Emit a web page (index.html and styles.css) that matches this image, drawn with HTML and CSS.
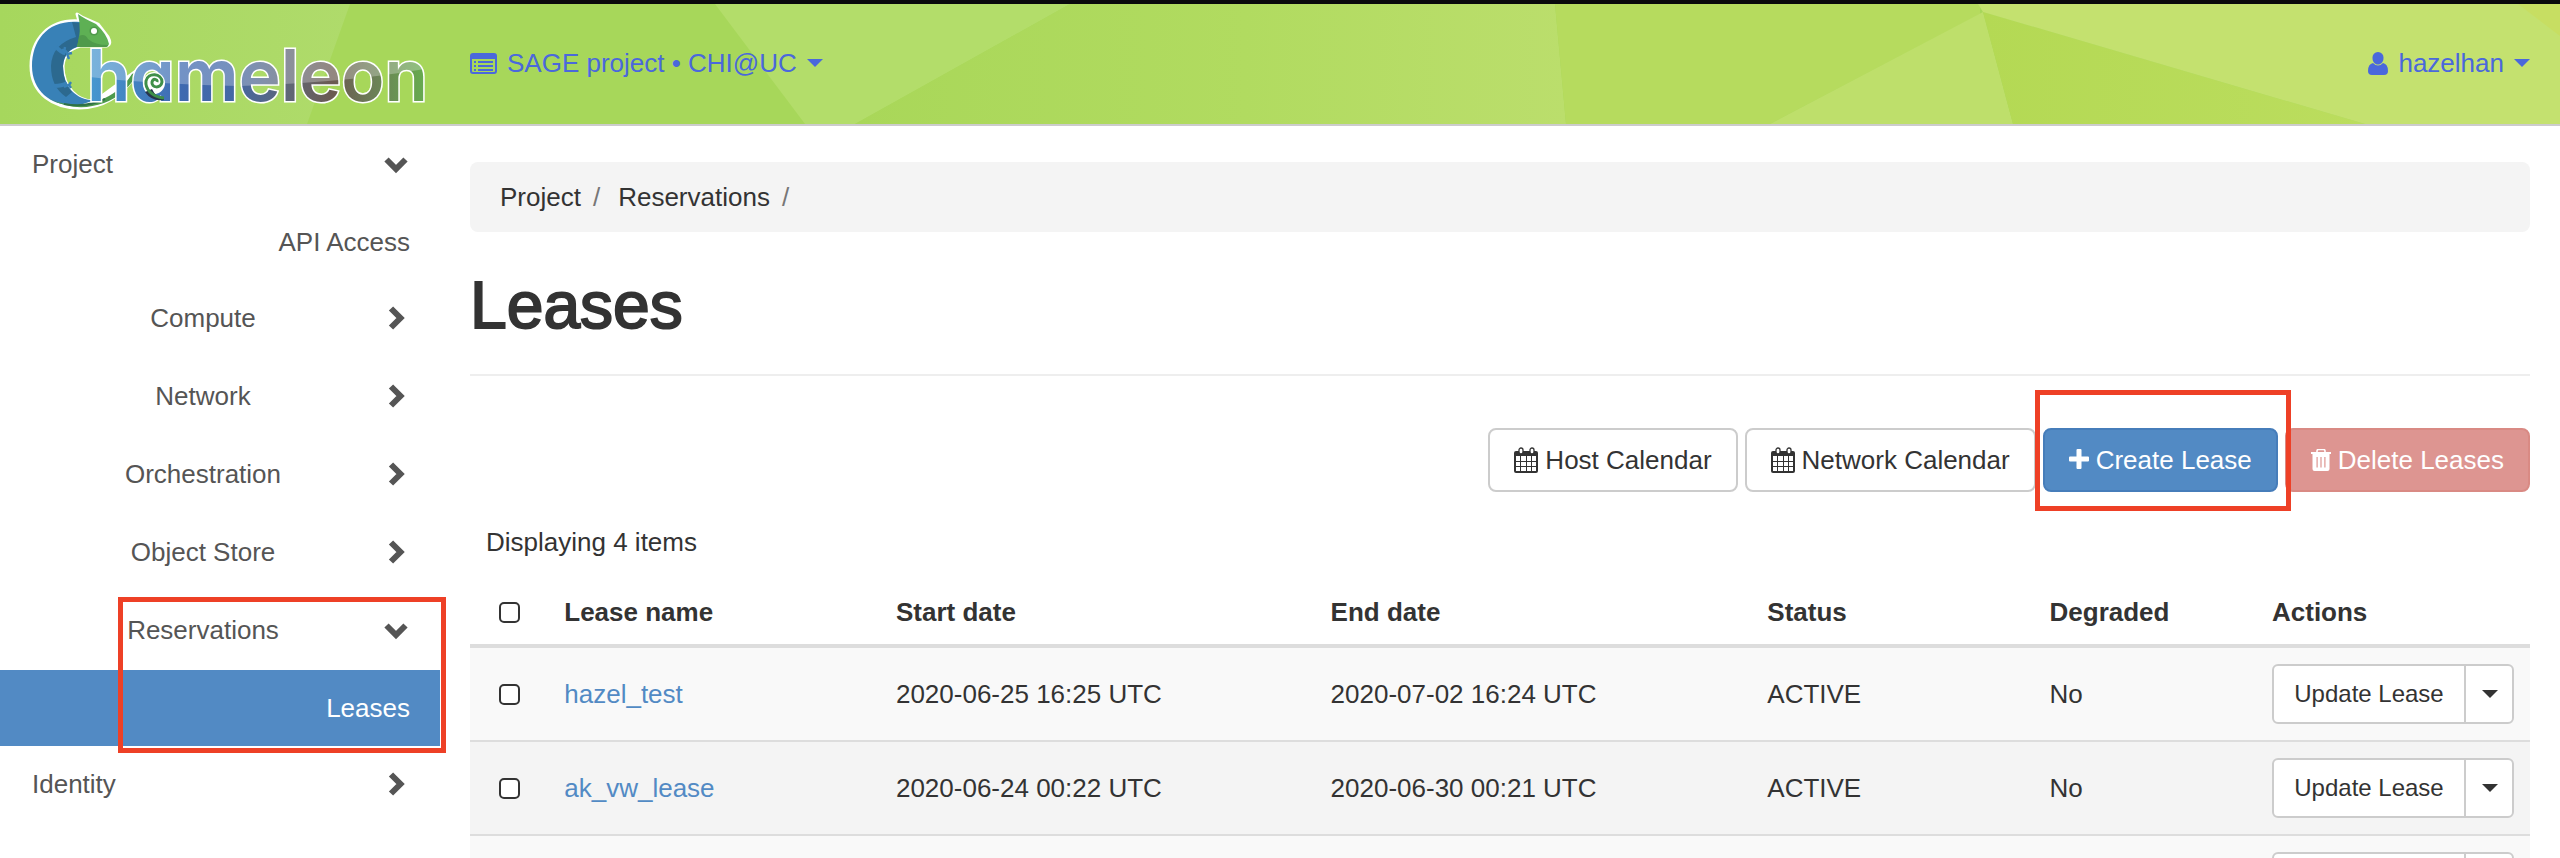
FILE: index.html
```
<!DOCTYPE html>
<html lang="en">
<head>
<meta charset="utf-8">
<title>Leases - Chameleon</title>
<link rel="stylesheet" href="styles.css">
</head>
<body>
<svg class="defs" aria-hidden="true">
  <symbol id="chevron-down" viewBox="0 0 24 24"><path d="M2.500 7.500l9.500 9.500 9.500-9.500" fill="none" stroke="currentColor" stroke-width="6"/></symbol>
  <symbol id="chevron-right" viewBox="0 0 24 24"><path d="M7 2.500l9.500 9.500L7 21.500" fill="none" stroke="currentColor" stroke-width="6"/></symbol>
  <symbol id="caret" viewBox="0 0 16 8"><path d="M0 0h16L8 8z" fill="currentColor"/></symbol>
  <symbol id="calendar" viewBox="0 0 24 26">
    <path d="M2 4h20q2 0 2 2v18q0 2-2 2H2q-2 0-2-2V6q0-2 2-2z" fill="currentColor"/>
    <path d="M2 9h4v5H2zM7 9h5v5H7zM13 9h4v5h-4zM18 9h4v5h-4zM2 15h4v4H2zM7 15h5v4H7zM13 15h4v4h-4zM18 15h4v4h-4zM2 20h4v4H2zM7 20h5v4H7zM13 20h4v4h-4zM18 20h4v4h-4z" fill="#fff"/>
    <rect x="5" y="1" width="4" height="6" rx="2" fill="#fff" stroke="currentColor" stroke-width="1.3"/>
    <rect x="16" y="1" width="4" height="6" rx="2" fill="#fff" stroke="currentColor" stroke-width="1.3"/>
  </symbol>
</svg>
<div class="shell">
  <header class="topbar">
    <svg class="topbar-art" viewBox="0 0 2560 120" preserveAspectRatio="none" aria-hidden="true">
      <defs>
        <linearGradient id="g1"><stop offset="0" stop-color="#a6d75d"/><stop offset="1" stop-color="#afdb6b"/></linearGradient>
        <linearGradient id="g2"><stop offset="0" stop-color="#a9d759"/><stop offset=".55" stop-color="#b1db60"/><stop offset="1" stop-color="#bbde6c"/></linearGradient>
        <linearGradient id="g3"><stop offset="0" stop-color="#b4d954"/><stop offset="1" stop-color="#bbdd5e"/></linearGradient>
      </defs>
      <rect width="2560" height="120" fill="#a7d75a"/>
      <path d="M0 0H350L307 120H0z" fill="url(#g1)"/>
      <path d="M715 0H1070L855 120H805z" fill="#b3dd6a"/>
      <path d="M1070 0H1555L1566 120H855z" fill="url(#g2)"/>
      <path d="M1555 0H1980V10L1770 120H1566z" fill="#b6db5e"/>
      <path d="M1983 8L2013 120H1770z" fill="#bedf6b"/>
      <path d="M1983 8L2365 120H2013z" fill="url(#g3)"/>
      <path d="M1978 0H2560V120H2365L1983 8z" fill="#c4e16f"/>
      <path d="M2518 0H2560V32z" fill="#c7de62"/>
    </svg>
    <a class="brand" href="#" aria-label="Chameleon">
      <svg class="brand-logo" viewBox="0 0 440 120" role="img">
        <defs>
          <linearGradient id="ink" x1="92" x2="427" y1="0" y2="0" gradientUnits="userSpaceOnUse">
            <stop offset="0" stop-color="#4697cf"/><stop offset=".27" stop-color="#3f69b0"/><stop offset=".42" stop-color="#4468a5"/>
            <stop offset=".6" stop-color="#616673"/><stop offset=".72" stop-color="#6b5a51"/><stop offset=".83" stop-color="#6c7c57"/><stop offset="1" stop-color="#66ad4e"/>
          </linearGradient>
          <pattern id="gloss" patternUnits="userSpaceOnUse" width="440" height="120">
            <rect width="440" height="120" fill="url(#ink)"/>
            <path d="M0 0H440V62Q360 78 240 82Q150 80 90 73H0z" fill="#fff" fill-opacity=".27"/>
          </pattern>
        </defs>
        <path d="M79 17C48 15 31 36 31 62C31 90 54 104 79 104C104 104 120 92 134 74L140 64L95 97C78 98 63 84 63 62C64 50 70 45 80 42H107C111 40 110 37 108 33L98 20L82 13L77 10z" fill="#fff" stroke="#fff" stroke-width="3" stroke-linejoin="round"/>
        <path d="M80 18C48 15 32 36 32 62C32 89 54 104 80 101L95 96C78 97 63 84 63 62C64 50 70 45 80 42z" fill="#3881b7"/>
        <path d="M72 18L80 19V42C70 44 64 50 63 62Q63 78 72 88L66 93Q51 83 51 62Q52 40 76 33z" fill="#2c698f"/>
        <path d="M56 43q6 6 9 6M54 82q8 0 13-3" fill="none" stroke="#3881b7" stroke-width="4"/>
        <path d="M62 46q4 0 5 3m5 0l-5 1 2 5m-5-6l1-6M64 83l5-2 2 3m-2-3l2-3" fill="none" stroke="#3881b7" stroke-width="2.4"/>
        <path d="M50 95Q75 106 98 97Q120 89 132 70L140 66Q126 91 104 99Q76 109 50 95z" fill="#4c9a4c"/>
        <path d="M64 100Q86 104 105 95" fill="none" stroke="#2f7146" stroke-width="2"/>
        <text class="brand-text" x="87" y="97">hameleon</text>
        <path d="M78 10Q83 14 96 20Q107 30 109 40Q108 43 105 43H77Q82 27 78 10z" fill="#5eb054"/>
        <path d="M79 32Q85 29 88 35Q95 41 108 41Q108 43 105 43H77z" fill="#4f9a4b"/>
        <circle cx="94" cy="27" r="4.6" fill="#4f9a4b"/><circle cx="94" cy="27" r="3" fill="#fff"/>
        <circle cx="154" cy="79" r="11" fill="#fff"/>
        <path d="M145 88q7 10 19 8v-3q-8 1-12-8z" fill="#28344b"/>
        <path d="M164 94C151 93 145 84 146 77C148 68 162 69 162 78C161 85 151 84 152 78C153 74 158 75 157 78" fill="none" stroke="#3f8f49" stroke-width="3"/>
      </svg>
    </a>
    <button class="menu-btn" type="button">
      <svg class="icon-list" viewBox="0 0 27 21" aria-hidden="true"><rect x="1" y="1" width="25" height="19" rx="2" fill="none" stroke="currentColor" stroke-width="2"/><path d="M1 1h25v5H1zM4 8h2v2H4zM8 8h15v2H8zM4 12h2v2H4zM8 12h15v2H8zM4 16h2v2H4zM8 16h15v2H8z" fill="currentColor"/></svg>
      <span>SAGE project • CHI@UC</span>
      <svg class="caret" aria-hidden="true"><use href="#caret"/></svg>
    </button>
    <button class="menu-btn menu-user" type="button">
      <svg class="icon-user" viewBox="0 0 20 23" aria-hidden="true"><path d="M10 0a5.500 5.500 0 0 1 5.500 6C15.500 10 13 12.500 10 12.500S4.500 10 4.500 6A5.500 5.500 0 0 1 10 0zM5 11q5 5 10 0 5 1 5 8 0 4-4 4H4q-4 0-4-4 0-7 5-8z" fill="currentColor"/></svg>
      <span>hazelhan</span>
      <svg class="caret" aria-hidden="true"><use href="#caret"/></svg>
    </button>
  </header>
  <div class="columns">
    <nav class="sidebar" aria-label="Main">
      <a class="nav-item nav-top" href="#"><span>Project</span><svg class="chevron" aria-hidden="true"><use href="#chevron-down"/></svg></a>
      <a class="nav-item nav-leaf" href="#">API Access</a>
      <div class="nav-groups">
        <a class="nav-item nav-sub" href="#"><span>Compute</span><svg class="chevron" aria-hidden="true"><use href="#chevron-right"/></svg></a>
        <a class="nav-item nav-sub" href="#"><span>Network</span><svg class="chevron" aria-hidden="true"><use href="#chevron-right"/></svg></a>
        <a class="nav-item nav-sub" href="#"><span>Orchestration</span><svg class="chevron" aria-hidden="true"><use href="#chevron-right"/></svg></a>
        <a class="nav-item nav-sub" href="#"><span>Object Store</span><svg class="chevron" aria-hidden="true"><use href="#chevron-right"/></svg></a>
        <div class="nav-open">
          <a class="nav-item nav-sub" href="#"><span>Reservations</span><svg class="chevron" aria-hidden="true"><use href="#chevron-down"/></svg></a>
          <a class="nav-item nav-leaf active" href="#" aria-current="page">Leases</a>
          <span class="mark mark-nav"></span>
        </div>
      </div>
      <a class="nav-item nav-top" href="#"><span>Identity</span><svg class="chevron" aria-hidden="true"><use href="#chevron-right"/></svg></a>
    </nav>
    <main class="content">
      <ol class="breadcrumb">
        <li><a href="#">Project</a></li>
        <li><a href="#">Reservations</a></li>
      </ol>
      <div class="page-header"><h1>Leases</h1></div>
      <div class="toolbar">
        <button class="btn" type="button"><svg class="icon-cal" aria-hidden="true"><use href="#calendar"/></svg>Host Calendar</button>
        <button class="btn" type="button"><svg class="icon-cal" aria-hidden="true"><use href="#calendar"/></svg>Network Calendar</button>
        <div class="marked">
          <button class="btn btn-primary" type="button"><svg class="icon-sm" viewBox="0 0 20 22" aria-hidden="true"><path d="M8.500 0h3q1 0 1 1v6.500H19q1 0 1 1v3q0 1-1 1h-6.500V19q0 1-1 1h-3q-1 0-1-1v-6.500H1q-1 0-1-1v-3q0-1 1-1h6.500V1q0-1 1-1z" fill="currentColor"/></svg>Create Lease</button>
          <span class="mark mark-btn"></span>
        </div>
        <button class="btn btn-danger" type="button" disabled><svg class="icon-sm" viewBox="0 0 20 22" aria-hidden="true"><path d="M6 3V2q0-1.500 1.500-1.500h5Q14 .5 14 2v1" fill="none" stroke="currentColor" stroke-width="1.600"/><path d="M0 3h20v2h-1.500v15q0 2-2 2h-13q-2 0-2-2V5H0zM5.500 8v10.500h1.200V8zM9.400 8v10.500h1.200V8zM13.300 8v10.500h1.200V8z" fill="currentColor" fill-rule="evenodd"/></svg>Delete Leases</button>
      </div>
      <p class="count">Displaying 4 items</p>
      <table class="leases">
        <colgroup><col class="c-check"><col class="c-name"><col class="c-start"><col class="c-end"><col class="c-status"><col class="c-degraded"><col class="c-actions"></colgroup>
        <thead>
          <tr><th class="check"><input type="checkbox" aria-label="Select all"></th><th>Lease name</th><th>Start date</th><th>End date</th><th>Status</th><th>Degraded</th><th>Actions</th></tr>
        </thead>
        <tbody>
          <tr>
            <td class="check"><input type="checkbox" aria-label="Select hazel_test"></td>
            <td><a href="#">hazel_test</a></td><td>2020-06-25 16:25 UTC</td><td>2020-07-02 16:24 UTC</td><td>ACTIVE</td><td>No</td>
            <td><div class="split"><button type="button">Update Lease</button><button class="split-more" type="button" aria-label="More actions"><svg class="caret" aria-hidden="true"><use href="#caret"/></svg></button></div></td>
          </tr>
          <tr class="shaded">
            <td class="check"><input type="checkbox" aria-label="Select ak_vw_lease"></td>
            <td><a href="#">ak_vw_lease</a></td><td>2020-06-24 00:22 UTC</td><td>2020-06-30 00:21 UTC</td><td>ACTIVE</td><td>No</td>
            <td><div class="split"><button type="button">Update Lease</button><button class="split-more" type="button" aria-label="More actions"><svg class="caret" aria-hidden="true"><use href="#caret"/></svg></button></div></td>
          </tr>
          <tr>
            <td class="check"><input type="checkbox" aria-label="Select lease"></td>
            <td></td><td></td><td></td><td></td><td></td>
            <td><div class="split"><button type="button" aria-label="Update Lease"></button><button class="split-more" type="button" aria-label="More actions"><svg class="caret" aria-hidden="true"><use href="#caret"/></svg></button></div></td>
          </tr>
        </tbody>
      </table>
    </main>
  </div>
</div>
</body>
</html>
```
FILE: styles.css
```
* { box-sizing: border-box; }

body {
  margin: 0;
  background: #fff;
  color: #333;
  font: 26px/36px "Liberation Sans", Arial, sans-serif;
}

button {
  font: inherit;
  color: inherit;
  margin: 0;
  cursor: pointer;
}

a { text-decoration: none; }
svg { display: block; flex: none; }
.defs { position: absolute; width: 0; height: 0; }

.shell {
  height: 100vh;
  overflow: hidden;
}

/* Top bar */
.topbar {
  position: relative;
  display: flex;
  align-items: center;
  border-top: 4px solid #0a0a0c;
  border-bottom: 2px solid #ccc;
  padding-right: 30px;
}
.topbar-art {
  position: absolute;
  inset: 0;
  width: 100%;
  height: 100%;
}
.brand {
  position: relative;
  width: 470px;
}
.brand-logo { width: 440px; height: 120px; }
.brand-text {
  font-family: Inter, sans-serif;
  font-size: 71px;
  font-weight: 600;
  font-feature-settings: "cv11";
  fill: url(#gloss);
  stroke: #fff;
  stroke-width: 3px;
  paint-order: stroke;
}
.menu-btn {
  position: relative;
  display: flex;
  align-items: center;
  gap: 10px;
  padding: 0 0 2px;
  border: 0;
  background: none;
  color: #4a68dc;
}
.menu-user { margin-left: auto; }
.icon-list { width: 27px; height: 21px; }
.icon-user { width: 20px; height: 23px; }
.caret { width: 16px; height: 8px; }

.columns { display: flex; }

/* Sidebar */
.sidebar {
  flex: none;
  width: 440px;
  margin-right: 30px;
}
.nav-item {
  display: flex;
  align-items: center;
  height: 76px;
  padding: 0 32px;
  color: #555;
}
.nav-top { justify-content: space-between; }
.nav-sub { padding-left: 22px; }
.nav-sub span { flex: 1; text-align: center; }
.nav-leaf {
  justify-content: flex-end;
  margin-top: 2px;
  padding-right: 30px;
}
.nav-groups {
  display: flex;
  flex-direction: column;
  gap: 2px;
}
.nav-open { position: relative; }
.active {
  background: #528ac4;
  color: #fff;
}
.chevron { width: 24px; height: 24px; }

/* Highlight frames */
.mark {
  position: absolute;
  z-index: 2;
  border: 5px solid #ee4026;
  pointer-events: none;
}
.mark-nav { inset: 5px -6px -7px 118px; }
.mark-btn { inset: -38px -13px -19px -8px; }

/* Content */
.content {
  flex: 1;
  min-width: 0;
  padding: 36px 30px 0 0;
}
.breadcrumb {
  display: flex;
  margin: 0;
  padding: 17px 30px;
  list-style: none;
  background: #f4f4f4;
  border-radius: 8px;
}
.breadcrumb a { color: #333; }
.breadcrumb li::after {
  content: "/";
  padding: 0 18px 0 12px;
  color: #777;
}
.page-header {
  padding: 37px 0 33px;
  border-bottom: 2px solid #eee;
}
h1 {
  margin: 0;
  font-size: 66px;
  line-height: 72px;
  font-weight: 400;
  -webkit-text-stroke: 2px #333;
}

.toolbar {
  display: flex;
  justify-content: flex-end;
  gap: 7px;
  margin-top: 52px;
}
.marked { position: relative; }
.btn {
  display: flex;
  align-items: center;
  gap: 7px;
  padding: 15px 24px;
  border: 2px solid #ccc;
  border-radius: 8px;
  background: #fff;
  line-height: 30px;
  white-space: nowrap;
}
.btn-primary { background: #528ac4; border-color: #467dba; color: #fff; }
.btn-danger { background: #dd9591; border-color: #d98a84; color: #fff; }
.icon-cal { width: 24px; height: 26px; }
.icon-sm { width: 20px; height: 22px; }

.count { margin: 32px 16px 20px; }

/* Table */
.leases {
  width: 100%;
  table-layout: fixed;
  border-collapse: separate;
  border-spacing: 0;
}
.c-check { width: 3.8%; }
.c-name { width: 16.1%; }
.c-start { width: 21.1%; }
.c-end { width: 21.2%; }
.c-status { width: 13.7%; }
.c-degraded { width: 10.8%; }
.c-actions { width: 13.3%; }
.leases th {
  height: 68px;
  padding: 0 16px;
  border-bottom: 4px solid #ddd;
  text-align: left;
}
.leases td {
  padding: 16px;
  border-bottom: 2px solid #ddd;
  background: #f9f9f9;
}
.leases .shaded td { background: #f4f4f4; }
.leases a { color: #528ac4; }
.leases .check { text-align: center; }
.check input {
  appearance: none;
  display: block;
  width: 21px;
  height: 21px;
  margin: 0 auto;
  border: 2px solid #333;
  border-radius: 5px;
  background: #fff;
}
.split { display: flex; }
.split button {
  min-width: 194px;
  height: 60px;
  padding: 0 20px;
  border: 2px solid #ccc;
  border-radius: 6px 0 0 6px;
  background: #fff;
  font-size: 24px;
  white-space: nowrap;
}
.split .split-more {
  min-width: 0;
  margin-left: -2px;
  padding: 0 16px;
  border-radius: 0 6px 6px 0;
}
```
